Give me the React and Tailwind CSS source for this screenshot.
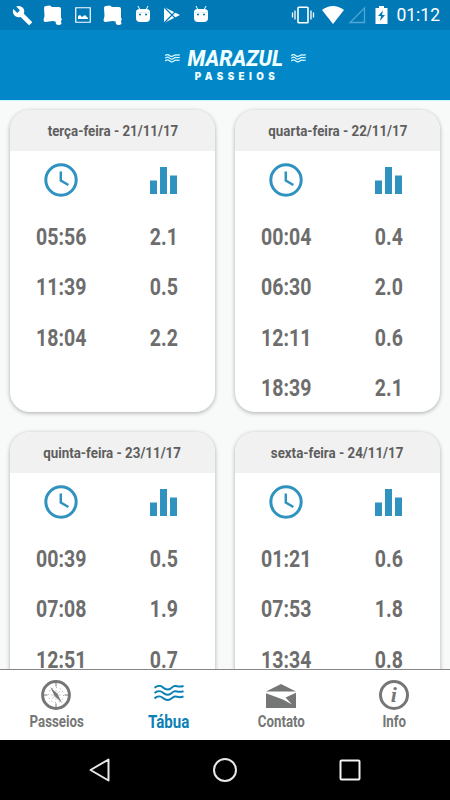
import React from 'react';

const days = [
  { title: 'terça-feira - 21/11/17', tides: [['05:56', '2.1'], ['11:39', '0.5'], ['18:04', '2.2']] },
  { title: 'quarta-feira - 22/11/17', tides: [['00:04', '0.4'], ['06:30', '2.0'], ['12:11', '0.6'], ['18:39', '2.1']] },
  { title: 'quinta-feira - 23/11/17', tides: [['00:39', '0.5'], ['07:08', '1.9'], ['12:51', '0.7']] },
  { title: 'sexta-feira - 24/11/17', tides: [['01:21', '0.6'], ['07:53', '1.8'], ['13:34', '0.8']] },
];

function Waves({ className, stroke = 2 }) {
  return (
    <svg viewBox="0 0 30 17" className={className} fill="none" stroke="currentColor" strokeWidth={stroke}>
      {[0, 5.3, 10.6].map((y) => (
        <path key={y} transform={`translate(0 ${y})`} d="M.5 2.8C3 .5 6.500 .2 9 2.400S14 5.500 17 3.200 20.500 .6 23 1.200 27 2 29.500 .8" />
      ))}
    </svg>
  );
}

function Clock() {
  return (
    <svg viewBox="0 0 34 34" className="size-[34px]" fill="none" stroke="#2f92bf">
      <circle cx="17" cy="17" r="15.200" strokeWidth="3" />
      <path d="M16.800 8.500v9l7.600 4.500" strokeWidth="2.500" />
    </svg>
  );
}

function Bars() {
  return (
    <svg viewBox="0 0 28 28" className="size-7" fill="#2f92bf">
      <path d="M0 14.500h7V28H0zM10 1h7v27h-7zM20 9.500h7V28h-7z" />
    </svg>
  );
}

function Card({ day }) {
  return (
    <section className="h-[302px] overflow-hidden rounded-[20px] bg-white shadow-[0_1px_4px_rgba(0,0,0,0.32)]">
      <h2 className="flex h-[41px] items-center justify-center bg-[#f1f1f1] pt-0.5 text-[15.5px] font-bold text-[#5e5e5e]">
        <span className="scale-x-[0.86] whitespace-nowrap">{day.title}</span>
      </h2>
      <div className="grid grid-cols-2 text-[23.5px] font-bold text-[#6d6d6d]">
        <div className="flex h-[61.5px] items-center justify-center pb-[3px]"><Clock /></div>
        <div className="flex h-[61.5px] items-center justify-center pb-[3px]"><Bars /></div>
        {day.tides.flat().map((value, i) => (
          <div key={i} className="flex h-[50.4px] items-center justify-center">
            <span className="scale-x-[0.83] pl-px">{value}</span>
          </div>
        ))}
      </div>
    </section>
  );
}

function Folder() {
  return (
    <svg viewBox="0 0 20 20" className="size-5" fill="#fff">
      <path d="M1 3q0-2 2-2l4-.5 2 1.500h7q2 0 2 2v9l1 1-1 2 .5 3-3 1.500-2.500-1.500-.5-2.500-3-.5-7 1q-2 0-2-2l1-4z" />
    </svg>
  );
}

function Android() {
  return (
    <svg viewBox="0 0 16 18" className="h-[18px] w-4">
      <path d="M3 1l2 4M13 1l-2 4" stroke="#fff" />
      <path d="M1 7q0-3 4-3h6q4 0 4 3v6q0 4-4 4H5q-4 0-4-4z" fill="#fff" />
      <path d="M4 9.500h2M10 9.500h2" stroke="#0b79b5" strokeWidth="1.500" />
      <path d="M1 7.500h14" stroke="#b9e2f4" strokeWidth=".5" />
    </svg>
  );
}

function StatusBar() {
  return (
    <div className="flex h-[30px] items-center bg-[#0279b7] text-white">
      <div className="flex items-center pl-3">
        <svg viewBox="0 0 24 24" className="mr-2.5 size-[21px]" fill="#fff">
          <path d="M22.700 19l-9.100-9.100c.9-2.300.4-5-1.500-6.900-2-2-5-2.400-7.400-1.300L9 6 6 9 1.600 4.700C.4 7.100.9 10.100 2.900 12.100c1.900 1.900 4.600 2.400 6.900 1.500l9.100 9.100c.4.4 1 .4 1.400 0l2.300-2.300c.5-.4.5-1.100.1-1.400z" />
        </svg>
        <Folder />
        <svg viewBox="0 0 16 16" className="mx-3 size-4" fill="none">
          <path d="M.75.75h14.500v14.500H.75z" stroke="#fff" strokeWidth="1.200" />
          <path d="M3 12V9l2-1 2 2 3-2 3 3v1z" fill="#fff" />
        </svg>
        <Folder />
        <span className="mx-3 -mt-0.5 h-[18px]"><Android /></span>
        <svg viewBox="0 0 18 18" className="mr-3 size-[18px]">
          <path d="M1 1l16 8L1 17z" fill="#fff" />
          <path d="M1 1l12 12M1 17L13 5" stroke="#0279b7" strokeWidth="1.200" />
        </svg>
        <span className="-mt-0.5 h-[18px]"><Android /></span>
      </div>
      <div className="ml-auto flex items-center pr-2.5">
        <svg viewBox="0 0 24 18" className="mr-[7px] h-[18px] w-6" fill="none" stroke="#fff">
          <rect x="7" y="1.200" width="10" height="15.600" rx=".8" strokeWidth="1.600" />
          <path d="M4 4.500v9M20 4.500v9" strokeWidth="1.300" />
          <path d="M1.500 6.500v5M22.500 6.500v5" strokeWidth="1.300" />
        </svg>
        <svg viewBox="0 0 22 18" className="mr-1 h-[18px] w-[22px]" fill="#fff">
          <path d="M0 4Q11-4 22 4L11 18z" />
        </svg>
        <svg viewBox="0 0 18 18" className="mr-[9px] size-[18px]" fill="none" stroke="#4fa7d5" strokeWidth="1.300">
          <path d="M16.500 2v14.500H2z" />
        </svg>
        <svg viewBox="0 0 13 18" className="mr-2 h-[18px] w-[13px]">
          <path d="M4 0h5v2h3.500v16H.5V2H4z" fill="#fff" />
          <path d="M8 4.500L3 10h3l-1 5 5-6H7z" fill="#0279b7" />
        </svg>
        <span className="pt-0.5 text-[17.5px] leading-none">01:12</span>
      </div>
    </div>
  );
}

function Tab({ label, icon, active }) {
  return (
    <div className={`flex flex-1 flex-col items-center ${active ? 'text-[#0d81b5]' : 'text-[#757776]'}`}>
      <div className="flex h-[41px] items-center pt-2">{icon}</div>
      <span className={`pt-px font-bold leading-5 ${active ? 'scale-x-[0.84] text-[18px]' : 'scale-x-[0.83] text-[16px]'}`}>{label}</span>
    </div>
  );
}

const compass = (
  <svg viewBox="0 0 30 30" className="size-[30px]" fill="none" stroke="currentColor">
    <circle cx="15" cy="15" r="13.400" strokeWidth="3" />
    <path d="M15 3v3.500M15 23.500V27M3 15h3.500M23.500 15H27" strokeWidth="1" />
    <circle cx="15" cy="15" r="7.500" strokeWidth=".7" strokeDasharray="1 2.900" />
    <path d="M11 19l8-8M15 10v10M10 15h10" strokeWidth=".35" />
    <path d="M9.200 7l7.300 7L21 23l-7.300-7z" fill="currentColor" stroke="none" />
  </svg>
);

const envelope = (
  <svg viewBox="0 0 30 24" className="mt-0.5 h-6 w-[30px]" fill="currentColor">
    <path d="M0 7.500L15 0l15 7.500zM0 9.200L17 15.500l9 5L19.500 13.500 30 8.700V24H0z" />
  </svg>
);

const info = (
  <span className="flex size-[30px] items-center justify-center rounded-full border-3 border-current font-['Liberation_Serif',serif] text-[22px] font-bold italic leading-none">
    <span>i</span>
  </span>
);

export default function App() {
  return (
    <div className="flex h-[800px] w-[450px] flex-col overflow-hidden bg-[#f8faf9] font-['Roboto',sans-serif]">
      <StatusBar />
      <header className="flex h-[70px] shrink-0 flex-col items-center bg-[#0288c9] pl-5 text-white">
        <div className="mt-4 flex h-6 items-center gap-2 text-[#d9fbff]">
          <Waves className="h-[9px] w-[15px]" stroke={2.4} />
          <span className="flex w-[95px] justify-center text-[22.5px] font-extrabold italic leading-6 text-[#f0ffff]"><span className="scale-x-[0.93]">MARAZUL</span></span>
          <Waves className="h-[9px] w-[15px]" stroke={2.4} />
        </div>
        <span className="pl-[4px] pt-px font-['Inter',sans-serif] text-[9.8px] font-black leading-3 tracking-[4.4px] text-[#f0ffff]">PASSEIOS</span>
      </header>
      <main className="grid min-h-0 flex-1 grid-cols-2 content-start gap-5 overflow-hidden border-t border-[#c7f6ff] px-2.5 pt-[9px]">
        {days.map((day) => <Card key={day.title} day={day} />)}
      </main>
      <nav className="flex h-[71px] shrink-0 border-t border-[#858585] bg-white">
        <Tab label="Passeios" icon={compass} />
        <Tab label="Tábua" active icon={<Waves className="mb-[3px] h-[17px] w-[30px]" />} />
        <Tab label="Contato" icon={envelope} />
        <Tab label="Info" icon={info} />
      </nav>
      <footer className="flex h-[60px] shrink-0 items-center justify-center gap-[101px] bg-black">
        <svg viewBox="0 0 24 24" className="size-6" fill="none" stroke="#e8e8e8" strokeWidth="2" strokeLinejoin="round"><path d="M20.500 1.500v21L2.500 12z" /></svg>
        <svg viewBox="0 0 24 24" className="size-6" fill="none" stroke="#e8e8e8" strokeWidth="2"><circle cx="12" cy="12" r="11" /></svg>
        <svg viewBox="0 0 24 24" className="size-6" fill="none" stroke="#f2f2f2" strokeWidth="2"><rect x="2.500" y="2.500" width="19" height="19" rx="1" /></svg>
      </footer>
    </div>
  );
}
